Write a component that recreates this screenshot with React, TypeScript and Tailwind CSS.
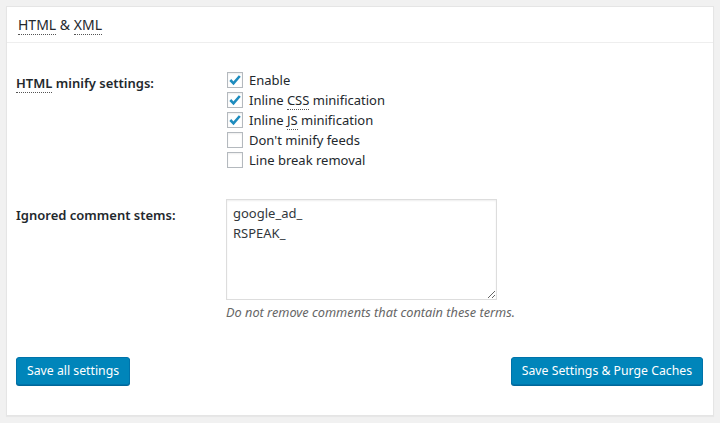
import { ReactNode } from 'react';

// checkbox list for the HTML minify row
const options = [
    { label: <>Enable</>, checked: true },
    { label: <>Inline <Abbr>CSS</Abbr> minification</>, checked: true },
    { label: <>Inline <Abbr>JS</Abbr> minification</>, checked: true },
    { label: <>Don't minify feeds</>, checked: false },
    { label: <>Line break removal</>, checked: false },
];

function Abbr({ children }: { children: ReactNode }) {
    return <span className="border-b border-dotted border-[#555] leading-none">{children}</span>;
}

function Checkbox({ checked }: { checked: boolean }) {
    return (
        <span className="flex h-4 w-4 shrink-0 items-center justify-center border border-[#b4b9be] bg-white shadow-[inset_0_1px_2px_rgba(0,0,0,0.07)]">
            {checked && (
                <svg width="14" height="14" viewBox="0 0 14 14">
                    <path d="M2.3 7 L5.5 10.3 L11.8 3" fill="none" stroke="#1e8cbe" strokeWidth="2.6" />
                </svg>
            )}
        </span>
    );
}

function Button({ children }: { children: ReactNode }) {
    return (
        <button className="h-[28px] rounded-[3px] border border-[#0073aa] bg-[#0085ba] px-[10px] text-[12.25px] leading-[26px] text-white shadow-[0_1px_0_#006799]">
            {children}
        </button>
    );
}

export default function App() {
    return (
        <div className="min-h-[423px] w-[720px] bg-[#f1f1f1] p-[6px] text-[13px] text-[#23282d] [font-family:'Noto_Sans',sans-serif]">
            <div className="h-[410px] w-[708px] border border-[#e5e5e5] bg-white shadow-[0_1px_1px_rgba(0,0,0,0.04)]">
                <div className="flex h-[36px] items-center border-b border-[#eee] pl-[11px] text-[14px]">
                    <span><Abbr>HTML</Abbr> &amp; <Abbr>XML</Abbr></span>
                </div>
                <div className="px-[9px] pt-[27px]">
                    <div className="flex">
                        <div className="w-[211px] pt-[3px] font-semibold leading-5"><Abbr>HTML</Abbr> minify settings:</div>
                        <ul className="flex flex-col">
                            {options.map((o, i) => (
                                <li key={i} className="flex h-5 items-center gap-[6px]">
                                    <Checkbox checked={o.checked} />
                                    <span className="leading-5">{o.label}</span>
                                </li>
                            ))}
                        </ul>
                    </div>
                    <div className="mt-[29px] flex">
                        <div className="w-[210px] pt-[6px] font-semibold leading-5">Ignored comment stems:</div>
                        <div className="flex flex-col">
                            <textarea
                                className="h-[101px] w-[271px] resize-y border border-[#ddd] px-[6px] py-[3px] text-[13px] leading-5 text-[#32373c] shadow-[inset_0_1px_2px_rgba(0,0,0,0.07)] outline-none"
                                defaultValue={"google_ad_\nRSPEAK_"}
                            />
                            <p className="mt-[2px] text-[12.75px] italic leading-5 text-[#666]">Do not remove comments that contain these terms.</p>
                        </div>
                    </div>
                    <div className="mt-[35px] flex justify-between pr-[1px]">
                        <Button>Save all settings</Button>
                        <Button>Save Settings &amp; Purge Caches</Button>
                    </div>
                </div>
            </div>
        </div>
    );
}
